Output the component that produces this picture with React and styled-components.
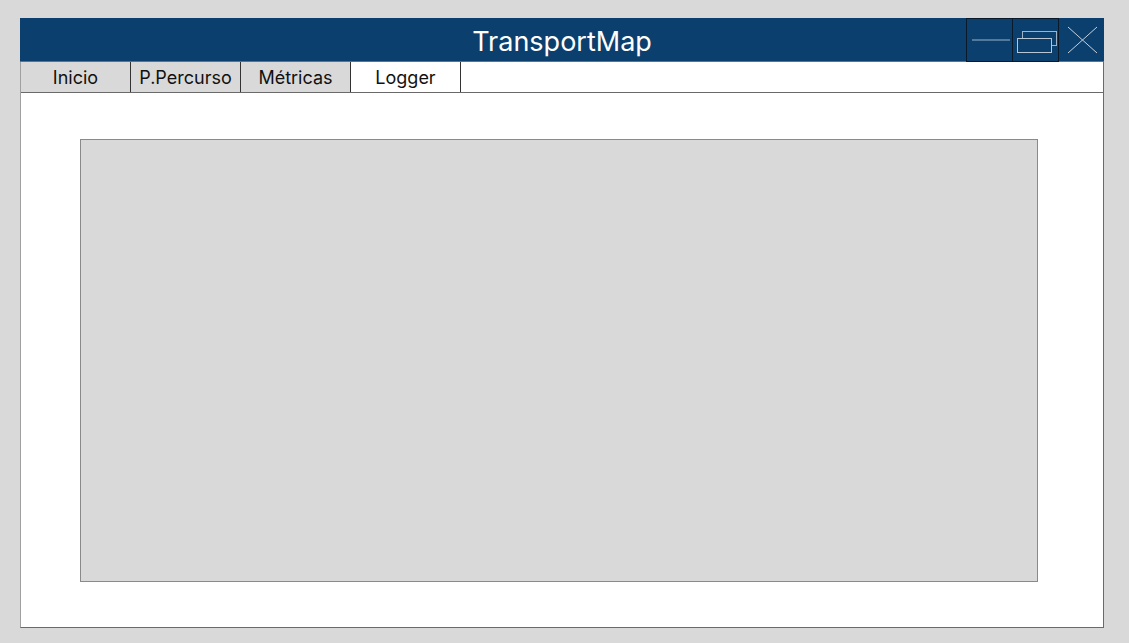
import React from 'react';
import styled, { createGlobalStyle } from 'styled-components';

const GlobalStyle = createGlobalStyle`
    html, body {
        margin: 0;
        background-color: #d9d9d9;
        font-family: Inter, "Noto Sans", sans-serif;
    }
`

const Page = styled.div`
    padding: 18px 0 0 20px;
    height: 643px;
    box-sizing: border-box;
`

const Window = styled.div`
    width: 1084px;
    height: 610px;
    box-sizing: border-box;
    background-color: #fff;
    border: 1px solid #6a6a6a;
    border-left-color: #a0a0a0;
    border-top: none;
    display: flex;
    flex-direction: column;
`

const TitleBar = styled.div`
    height: 43px;
    flex-shrink: 0;
    background-color: #0b3f6e;
    border-bottom: 1px solid #4a78a6;
    display: grid;
    grid-template-columns: 1fr auto 1fr;
    align-items: center;
    margin: 0 -1px 0 -1px;
`

const Title = styled.span`
    grid-column: 2;
    color: #fff;
    font-size: 27px;
    font-weight: 400;
    padding-top: 2px;
`

const Controls = styled.div`
    grid-column: 3;
    justify-self: end;
    display: flex;
    height: 100%;
`

const ControlBtn = styled.div`
    width: ${props => props.framed ? '47px' : '45px'};
    height: 44px;
    box-sizing: border-box;
    border: ${props => props.framed ? '1px solid #0a1a2a' : 'none'};
    margin-left: ${props => props.framed ? '-1px' : '0'};
    display: flex;
    align-items: center;
    justify-content: center;
`

const TabRow = styled.div`
    display: flex;
    height: 31px;
    flex-shrink: 0;
    box-sizing: border-box;
    border-bottom: 1px solid #6a6a6a;
`

const Tab = styled.div`
    width: 110px;
    box-sizing: border-box;
    background-color: ${props => props.active ? '#fff' : '#d9d9d9'};
    border-right: 1px solid #333;
    display: flex;
    align-items: center;
    justify-content: center;
    padding-top: 1px;
    font-size: 18px;
    color: #111;
    white-space: nowrap;
`

const Content = styled.div`
    flex: 1;
    padding: 46px 0 0 59px;
`

const Panel = styled.div`
    width: 958px;
    height: 443px;
    box-sizing: border-box;
    background-color: #d9d9d9;
    border: 1px solid #8a8a8a;
`

const tabs = ['Inicio', 'P.Percurso', 'Métricas', 'Logger'];

const App = () => {
    return (
        <Page>
            <GlobalStyle />
            <Window>
                <TitleBar>
                    <Title>TransportMap</Title>
                    <Controls>
                        <ControlBtn framed>
                            <svg width="40" height="4" viewBox="0 0 40 4">
                                <line x1="2" y1="2" x2="40" y2="2" stroke="#9fb3c8" strokeWidth="1" />
                            </svg>
                        </ControlBtn>
                        <ControlBtn framed>
                            <svg width="44" height="26" viewBox="0 0 44 26">
                                <rect x="8.5" y="4.5" width="34" height="14" fill="none" stroke="#9fb3c8" />
                                <rect x="3.5" y="11.5" width="34" height="14" fill="#0b3f6e" stroke="#b8c6d4" />
                            </svg>
                        </ControlBtn>
                        <ControlBtn>
                            <svg width="32" height="28" viewBox="0 0 32 28">
                                <line x1="2" y1="1" x2="31" y2="27" stroke="#c6d0da" strokeWidth="1" />
                                <line x1="31" y1="1" x2="2" y2="27" stroke="#c6d0da" strokeWidth="1" />
                            </svg>
                        </ControlBtn>
                    </Controls>
                </TitleBar>
                <TabRow>
                    {tabs.map(t => (
                        <Tab key={t} active={t === 'Logger'}>{t}</Tab>
                    ))}
                </TabRow>
                <Content>
                    <Panel />
                </Content>
            </Window>
        </Page>
    )
}

export default App;
